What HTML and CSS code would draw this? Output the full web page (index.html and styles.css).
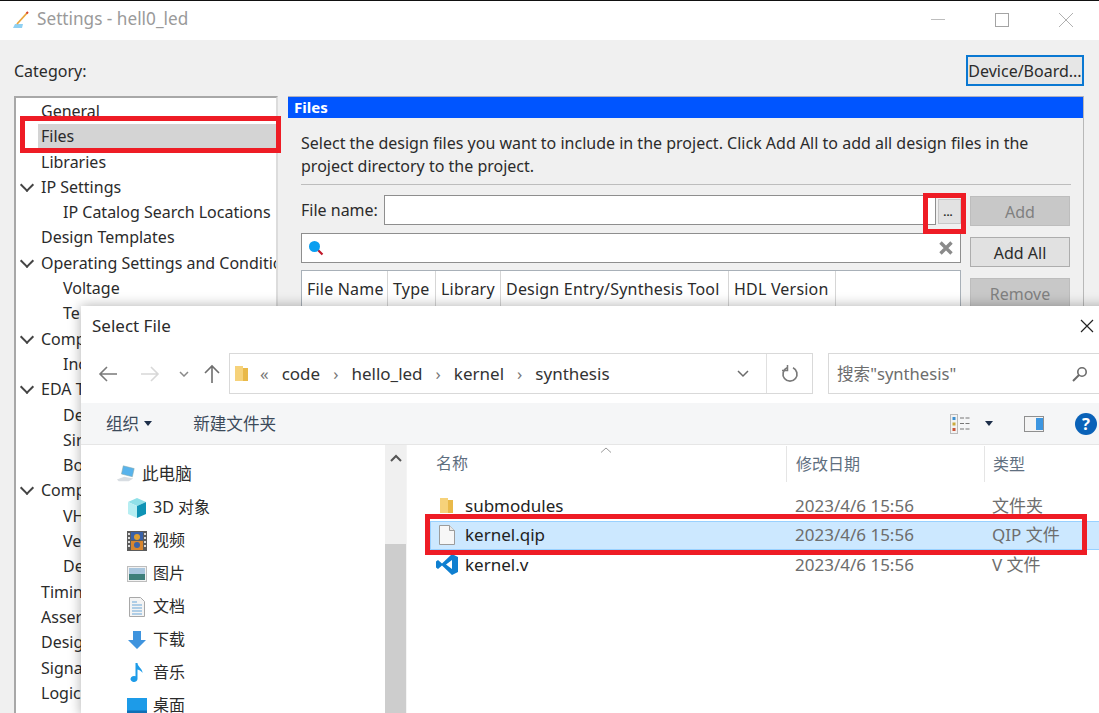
FILE: index.html
```html
<!DOCTYPE html>
<html lang="en">
<head>
<meta charset="utf-8">
<title>Settings - hell0_led</title>
<link rel="stylesheet" href="styles.css">
</head>
<body>
<div class="desktop">
  <section class="settings">
    <header class="titlebar">
      <svg class="app-icon" width="16" height="17" viewBox="0 0 16 17"><path d="M2 13h8l-1 4H0z" fill="#8fd0f2"/><path d="M4 13 14 2" stroke="#eaa63c" stroke-width="1.800" fill="none"/><path d="M13.500 2.500 15 1" stroke="#d8452c" stroke-width="2"/></svg>
      <span class="title-text">Settings - hell0_led</span>
      <div class="win-controls">
        <svg width="14" height="14" viewBox="0 0 14 14"><path d="M0 6.500h14" stroke="#bdbdbd" stroke-width="1"/></svg>
        <svg width="14" height="14" viewBox="0 0 14 14"><rect x=".5" y=".5" width="13" height="13" fill="none" stroke="#a4a4a4"/></svg>
        <svg width="14" height="14" viewBox="0 0 14 14"><path d="M0 0l14 14M14 0 0 14" stroke="#b0b0b0"/></svg>
      </div>
    </header>
    <div class="settings-body">
      <div class="category-row">
        <span>Category:</span>
        <button class="device-btn">Device/Board...</button>
      </div>
      <div class="columns">
        <nav class="tree">
          <div class="t-row l1">General</div>
          <div class="t-row l1 selected">Files</div>
          <div class="t-row l1">Libraries</div>
          <div class="t-row l1 exp">IP Settings</div>
          <div class="t-row l2">IP Catalog Search Locations</div>
          <div class="t-row l1">Design Templates</div>
          <div class="t-row l1 exp">Operating Settings and Conditions</div>
          <div class="t-row l2">Voltage</div>
          <div class="t-row l2">Te</div>
          <div class="t-row l1 exp">Comp</div>
          <div class="t-row l2">Inc</div>
          <div class="t-row l1 exp">EDA T</div>
          <div class="t-row l2">De</div>
          <div class="t-row l2">Sir</div>
          <div class="t-row l2">Bo</div>
          <div class="t-row l1 exp">Comp</div>
          <div class="t-row l2">VH</div>
          <div class="t-row l2">Ve</div>
          <div class="t-row l2">De</div>
          <div class="t-row l1">Timin</div>
          <div class="t-row l1">Asser</div>
          <div class="t-row l1">Desig</div>
          <div class="t-row l1">Signa</div>
          <div class="t-row l1">Logic</div>
        </nav>
        <main class="panel">
          <h2 class="panel-head">Files</h2>
          <div class="panel-body">
            <p class="desc">Select the design files you want to include in the project. Click Add All to add all design files in the project directory to the project.</p>
            <hr class="rule">
            <div class="form-grid">
              <div class="form-left">
                <div class="file-row">
                  <label>File name:</label>
                  <div class="input file-input"></div>
                  <button class="dots">...</button>
                </div>
                <div class="input filter">
                  <svg width="16" height="16" viewBox="0 0 16 16"><path d="M9.500 9.500l5 5" stroke="#c0182a" stroke-width="2.200"/><circle cx="6.500" cy="6.500" r="5.500" fill="#0a9ef0"/></svg>
                  <svg width="14" height="14" viewBox="0 0 14 14"><path d="M1.500 1.500l11 11M12.500 1.500l-11 11" stroke="#8a8a8a" stroke-width="3.400"/></svg>
                </div>
                <div class="table">
                  <span class="th w1">File Name</span><span class="th w2">Type</span><span class="th w3">Library</span><span class="th w4">Design Entry/Synthesis Tool</span><span class="th w5">HDL Version</span>
                </div>
              </div>
              <div class="side-btns">
                <button class="side off">Add</button>
                <button class="side">Add All</button>
                <button class="side off">Remove</button>
              </div>
            </div>
          </div>
        </main>
      </div>
    </div>
  </section>

  <section class="dialog">
    <header class="dlg-title">
      <span>Select File</span>
      <svg width="14" height="14" viewBox="0 0 14 14"><path d="M1 1l12 12M13 1 1 13" stroke="#222" stroke-width="1.200"/></svg>
    </header>
    <div class="nav-bar">
      <div class="nav-btns">
        <svg width="20" height="18" viewBox="0 0 20 18"><path d="M19 9H2M9 2 2 9l7 7" fill="none" stroke="#7a7a7a" stroke-width="1.600"/></svg>
        <svg width="20" height="18" viewBox="0 0 20 18"><path d="M1 9h17M11 2l7 7-7 7" fill="none" stroke="#d8d8d8" stroke-width="1.600"/></svg>
        <svg width="10" height="6" viewBox="0 0 10 6"><path d="M1 1l4 4 4-4" fill="none" stroke="#8a8a8a" stroke-width="1.500"/></svg>
        <svg width="16" height="20" viewBox="0 0 16 20"><path d="M8 19V2M1 9l7-7 7 7" fill="none" stroke="#6f6f6f" stroke-width="1.600"/></svg>
      </div>
      <div class="address">
        <div class="crumbs">
          <svg class="crumb-folder" width="14" height="17" viewBox="0 0 14 17"><path d="M0 1h8v15H0z" fill="#f6d27a"/><path d="M8 3h5v13H8z" fill="#e9b949"/></svg>
          <span class="chev">«</span><span>code</span><span class="chev">›</span><span>hello_led</span><span class="chev">›</span><span>kernel</span><span class="chev">›</span><span>synthesis</span>
        </div>
        <div class="addr-drop"><svg width="12" height="8" viewBox="0 0 12 8"><path d="M1 1l5 5 5-5" fill="none" stroke="#6b6b6b" stroke-width="1.500"/></svg></div>
        <div class="addr-refresh"><svg width="18" height="18" viewBox="0 0 18 18"><path d="M12 2.800A7 7 0 1 1 6 2.800" fill="none" stroke="#7a7a7a" stroke-width="1.700"/><path d="M6.500 0v5.500H1" fill="none" stroke="#7a7a7a" stroke-width="1.500"/></svg></div>
      </div>
      <div class="search">
        <span>搜索"synthesis"</span>
        <svg width="16" height="16" viewBox="0 0 16 16"><circle cx="10" cy="6" r="4.200" fill="none" stroke="#6b6b6b" stroke-width="1.600"/><path d="M7 9l-6 6" stroke="#6b6b6b" stroke-width="2"/></svg>
      </div>
    </div>
    <div class="toolbar">
      <span class="tool">组织<i class="caret"></i></span>
      <span class="tool new">新建文件夹</span>
      <div class="tool-right">
        <svg width="20" height="20" viewBox="0 0 20 20"><rect x=".5" y=".5" width="7" height="19" fill="#f2f2f2" stroke="#bbb"/><rect x="2.500" y="3" width="3" height="3" fill="#3d8fd0"/><rect x="2.500" y="8.500" width="3" height="3" fill="#c9a93a"/><rect x="2.500" y="14" width="3" height="3" fill="#c9553a"/><path d="M10 4h10M10 9.500h10M10 15h10" stroke="#777" stroke-dasharray="4 1.500"/></svg>
        <i class="caret"></i>
        <svg class="pane-ico" width="20" height="16" viewBox="0 0 20 16"><rect x=".5" y=".5" width="19" height="15" fill="#f4f4f4" stroke="#8f8f8f"/><rect x="12" y="2" width="7" height="12" fill="#3d96e0"/></svg>
        <span class="help">?</span>
      </div>
    </div>
    <div class="browser">
      <aside class="nav-pane">
        <div class="n-row pc">
          <svg width="22" height="20" viewBox="0 0 22 20"><path d="M8 1l12 3-2 9-12-3z" fill="#58b3ec" stroke="#8aa" stroke-width=".6"/><path d="M1 16l8-3 10 2-5 3H3z" fill="#d8dde2"/></svg>
          <span>此电脑</span>
        </div>
        <div class="n-row">
          <svg width="20" height="20" viewBox="0 0 20 20"><path d="M10 0l9 4-9 4-9-4z" fill="#8fe0e8"/><path d="M1 4l9 4v12l-9-4z" fill="#b6eef2"/><path d="M19 4l-9 4v12l9-4z" fill="#0f93b5"/></svg>
          <span>3D 对象</span>
        </div>
        <div class="n-row">
          <svg width="20" height="20" viewBox="0 0 20 20"><rect width="20" height="20" fill="#5b5b5b"/><path d="M1 2h2v2H1zM1 6h2v2H1zM1 10h2v2H1zM1 14h2v2H1zM17 2h2v2h-2zM17 6h2v2h-2zM17 10h2v2h-2zM17 14h2v2h-2z" fill="#ddd"/><rect x="4" y="1" width="12" height="8" fill="#3a62a8"/><rect x="4" y="10" width="12" height="9" fill="#d8862f"/><circle cx="10" cy="6" r="3" fill="#e0a030"/><circle cx="10" cy="14" r="3" fill="#3a62a8"/></svg>
          <span>视频</span>
        </div>
        <div class="n-row">
          <svg width="20" height="16" viewBox="0 0 20 16"><rect x=".5" y=".5" width="19" height="15" fill="#f2f2f2" stroke="#bdbdbd"/><rect x="2" y="2" width="16" height="6" fill="#a9c6de"/><rect x="2" y="8" width="16" height="6" fill="#3f7f7a"/></svg>
          <span>图片</span>
        </div>
        <div class="n-row">
          <svg width="16" height="20" viewBox="0 0 16 20"><path d="M.5.500h11l4 4v15H.5z" fill="#f4f4f4" stroke="#a8a8a8"/><path d="M3 5h5M3 8h10M3 11h10M3 14h10M3 17h10" stroke="#6aa7d8"/></svg>
          <span>文档</span>
        </div>
        <div class="n-row">
          <svg width="18" height="18" viewBox="0 0 18 18"><path d="M5 0h8v9h5l-9 9-9-9h5z" fill="#3f94de"/></svg>
          <span>下载</span>
        </div>
        <div class="n-row">
          <svg width="14" height="20" viewBox="0 0 14 20"><path d="M5.500 0h2c0 4 5 5 5 10-1-2-3-3-5-3.500V16a3.500 3 0 1 1-2-2.700z" fill="#1d9be8"/></svg>
          <span>音乐</span>
        </div>
        <div class="n-row">
          <svg width="20" height="15" viewBox="0 0 20 15"><rect width="20" height="15" fill="#1d9be8"/><rect x="0" y="12.500" width="20" height="2.500" fill="#0f6fb5"/></svg>
          <span>桌面</span>
        </div>
      </aside>
      <div class="scrollbar">
        <svg width="12" height="8" viewBox="0 0 12 8"><path d="M1 7l5-5 5 5" fill="none" stroke="#555" stroke-width="2"/></svg>
        <div class="thumb"></div>
      </div>
      <div class="list">
        <svg class="sort" width="12" height="6" viewBox="0 0 12 6"><path d="M1 5.500 6 1l5 4.500" fill="none" stroke="#9a9a9a"/></svg>
        <div class="list-head">
          <span class="c-name">名称</span><span class="c-date">修改日期</span><span class="c-type">类型</span>
        </div>
        <div class="f-row">
          <span class="c-name">
            <svg width="14" height="17" viewBox="0 0 14 17"><path d="M0 1h8v15H0z" fill="#f6d27a"/><path d="M8 3h5v13H8z" fill="#e9b949"/></svg>submodules</span>
          <span class="c-date">2023/4/6 15:56</span><span class="c-type">文件夹</span>
        </div>
        <div class="f-row active">
          <span class="c-name">
            <svg width="16" height="20" viewBox="0 0 16 20"><path d="M.5.500h10l5 5v14H.5z" fill="#f7f7f7" stroke="#9c9c9c"/><path d="M10.500.5v5h5" fill="#e8e8e8" stroke="#9c9c9c"/></svg>kernel.qip</span>
          <span class="c-date">2023/4/6 15:56</span><span class="c-type">QIP 文件</span>
        </div>
        <div class="f-row">
          <span class="c-name">
            <svg width="22" height="21" viewBox="0 0 22 21"><path d="M16 0l6 3v15l-6 3-10-9.500L2 15 0 13.500v-6L2 6l4 3.500zM16 6l-6 4.500 6 4.500z" fill="#0f7fd0" fill-rule="evenodd"/></svg>kernel.v</span>
          <span class="c-date">2023/4/6 15:56</span><span class="c-type">V 文件</span>
        </div>
      </div>
    </div>
  </section>

  <div class="mark m-files"></div>
  <div class="mark m-dots"></div>
  <div class="mark m-qip"></div>
</div>
</body>
</html>
```

FILE: styles.css
```css
* { box-sizing: border-box; }
html, body { margin: 0; height: 100%; overflow: hidden; }
body { font: 16px/1.2 "Noto Sans", "Noto Sans CJK SC", sans-serif; color: #2b2b2b; background: #f0f0f0; }
button { font: inherit; color: inherit; padding: 0; }
p, h2 { margin: 0; }

.desktop { position: relative; width: 1099px; height: 713px; overflow: hidden; }

.settings { height: 713px; display: flex; flex-direction: column; border-top: 1px solid #111; }
.titlebar { height: 39px; flex: none; background: #fff; display: flex; align-items: center; padding: 0 0 2px 13px; }
.app-icon { margin-right: 8px; }
.title-text { color: #9a9a9a; font-size: 17.200px; }
.win-controls { margin-left: auto; width: 168px; padding-right: 26px; display: flex; justify-content: space-between; align-items: center; }

.settings-body { flex: 1; display: flex; flex-direction: column; padding: 15px 15px 0 14px; min-height: 0; }
.category-row { height: 41px; display: flex; justify-content: space-between; align-items: flex-start; }
.category-row span { margin-top: 7px; }
.device-btn { width: 118px; height: 31px; padding-top: 2px; background: #e6e6e6; border: 2px solid #0a78d2; white-space: nowrap; overflow: hidden; }

.columns { flex: 1; display: flex; gap: 10px; min-height: 0; }
.tree { width: 264px; flex: none; background: #fff; border: 2px solid #a8a8a8; border-right-color: #dcdcdc; border-bottom: 0; padding-top: 1px; overflow: hidden; }
.t-row { height: 25.300px; line-height: 25px; white-space: nowrap; position: relative; }
.l1 { padding-left: 25px; }
.l2 { padding-left: 47px; }
.exp::before { content: ""; position: absolute; left: 6px; top: 5px; width: 8px; height: 8px; border: solid #444; border-width: 0 2px 2px 0; transform: rotate(45deg); }
.selected { background: #d4d4d4; margin-left: 22px; padding-left: 3px; }

.panel { flex: 1; min-width: 0; display: flex; flex-direction: column; border-right: 1px solid #b8b8b8; }
.panel-head { height: 22px; background: #0055ff; border-top: 1px solid #b0b0c0; color: #fff; font-size: 15px; font-weight: 700; line-height: 21px; padding-left: 6px; }
.panel-body { padding: 14px 12px 0 13px; }
.desc { line-height: 23px; }
.rule { height: 1px; border: 0; background: #bdbdbd; margin: 6px 0 10px; }

.form-grid { display: flex; gap: 9px; }
.form-left { width: 660px; flex: none; }
.file-row { display: flex; align-items: center; height: 30px; }
.file-row label { width: 83px; padding-top: 2px; }
.input { background: #fff; border: 1px solid #8e8e8e; }
.file-input { width: 552px; height: 30px; }
.dots { width: 23px; height: 25px; margin-left: 2px; margin-top: 3px; padding-right: 3px; background: #e2e2e2; border: 1px solid #c8c8c8; font-size: 11px; font-weight: 700; line-height: 18px; }
.filter { height: 30px; margin-top: 8px; display: flex; justify-content: space-between; align-items: center; padding: 0 7px 0 6px; }
.table { display: flex; height: 60px; margin-top: 7px; background: #fff; border: 1px solid #a8b0b8; }
.th { height: 36px; line-height: 37px; padding-left: 5px; border-right: 1px solid #d6d6d6; white-space: nowrap; flex: none; letter-spacing: .2px; }
.w1 { width: 86px; }
.w2 { width: 48px; }
.w3 { width: 65px; }
.w4 { width: 228px; }
.w5 { width: 107px; }

.side-btns { display: flex; flex-direction: column; gap: 11px; width: 100px; margin-top: 1px; }
.side { height: 30px; padding-top: 3px; background: #e1e1e1; border: 1px solid #adadad; flex: none; }
.off { background: #c8c8c8; border-color: #bdbdbd; color: #808080; }

.dialog { position: absolute; left: 81px; top: 306px; width: 1040px; height: 410px; background: #fff; box-shadow: 0 0 12px rgba(0,0,0,.32); display: flex; flex-direction: column; font-size: 17px; }
.dlg-title { height: 39px; flex: none; display: flex; justify-content: space-between; align-items: center; padding: 1px 27px 0 11px; }
.nav-bar { height: 58px; flex: none; display: flex; align-items: flex-start; padding-top: 8px; }
.nav-btns { width: 148px; height: 41px; padding-left: 17px; display: flex; align-items: center; }
.nav-btns svg:nth-child(2) { margin-left: 22px; }
.nav-btns svg:nth-child(3) { margin-left: 19px; }
.nav-btns svg:nth-child(4) { margin-left: 15px; }
.address { width: 584px; height: 41px; border: 1px solid #d9d9d9; display: flex; align-items: center; }
.crumbs { flex: 1; display: flex; align-items: center; gap: 13px; padding: 1px 0 0 5px; color: #333; }
.crumb-folder { margin-right: -2px; }
.chev { color: #777; }
.addr-drop { width: 46px; height: 100%; display: flex; align-items: center; justify-content: center; }
.addr-refresh { width: 46px; height: 100%; display: flex; align-items: center; justify-content: center; border-left: 1px solid #e0e0e0; }
.search { margin-left: 15px; width: 290px; height: 41px; border: 1px solid #d9d9d9; display: flex; align-items: center; justify-content: space-between; padding: 1px 29px 0 8px; color: #6d6d6d; font-size: 16.600px; }

.toolbar { height: 42px; flex: none; background: #f5f6f7; border-bottom: 1px solid #e6e6e6; display: flex; align-items: center; color: #3c4a5a; font-size: 16.600px; }
.tool { display: flex; align-items: center; }
.tool:first-child { margin-left: 25px; }
.new { margin-left: 41px; }
.caret { display: inline-block; margin-left: 5px; border: 4px solid transparent; border-top: 5px solid #1d2f4a; border-bottom: 0; }
.tool-right { margin-left: auto; width: 171px; display: flex; align-items: center; }
.tool-right .caret { margin-left: 15px; }
.pane-ico { margin-left: 31px; }
.help { margin-left: 31px; width: 22px; height: 22px; border-radius: 50%; background: #0a62b8; color: #fff; font-weight: 700; text-align: center; line-height: 22px; flex: none; }

.browser { flex: 1; display: flex; min-height: 0; }
.nav-pane { width: 304px; flex: none; padding: 13px 0 0 46px; overflow: hidden; font-size: 16px; }
.n-row { height: 33px; display: flex; align-items: center; gap: 6px; }
.n-row svg { width: 20px; flex: none; }
.pc { margin-left: -11px; padding-bottom: 2px; gap: 6px; font-size: 16.600px; }
.scrollbar { width: 21px; flex: none; background: #f0f0f0; display: flex; flex-direction: column; align-items: center; padding-top: 9px; }
.thumb { width: 100%; margin-top: 82px; flex: 1; background: #cdcdcd; }

.list { flex: 1; position: relative; padding-left: 23px; border-left: 1px solid #f4f4f4; }
.sort { position: absolute; left: 193px; top: 2px; }
.list-head, .f-row { display: flex; align-items: center; width: 670px; }
.list-head { height: 36px; margin: 1px 0 9px; color: #5f6f80; font-size: 16px; }
.list-head .c-name { padding-left: 6px; }
.list-head .c-date, .list-head .c-type { border-left: 1px solid #e5e5e5; height: 36px; line-height: 36px; color: #5f6f80; }
.c-name { width: 356px; flex: none; display: flex; align-items: center; }
.c-date { width: 198px; flex: none; padding-left: 9px; color: #6d6d6d; }
.c-type { flex: 1; padding-left: 8px; color: #6d6d6d; }
.f-row { height: 29.500px; }
.f-row .c-name { color: #222; }
.f-row .c-name svg { width: 22px; margin: 0 7px 0 6px; flex: none; }
.active { background: #cce8ff; box-shadow: inset 0 0 0 1px #99d1ff; }

.mark { position: absolute; border: 5px solid #ee1c25; }
.m-files { left: 20px; top: 116px; width: 261px; height: 37px; }
.m-dots { left: 923px; top: 193px; width: 43px; height: 41px; }
.m-qip { left: 425px; top: 514px; width: 662px; height: 41px; }
```
